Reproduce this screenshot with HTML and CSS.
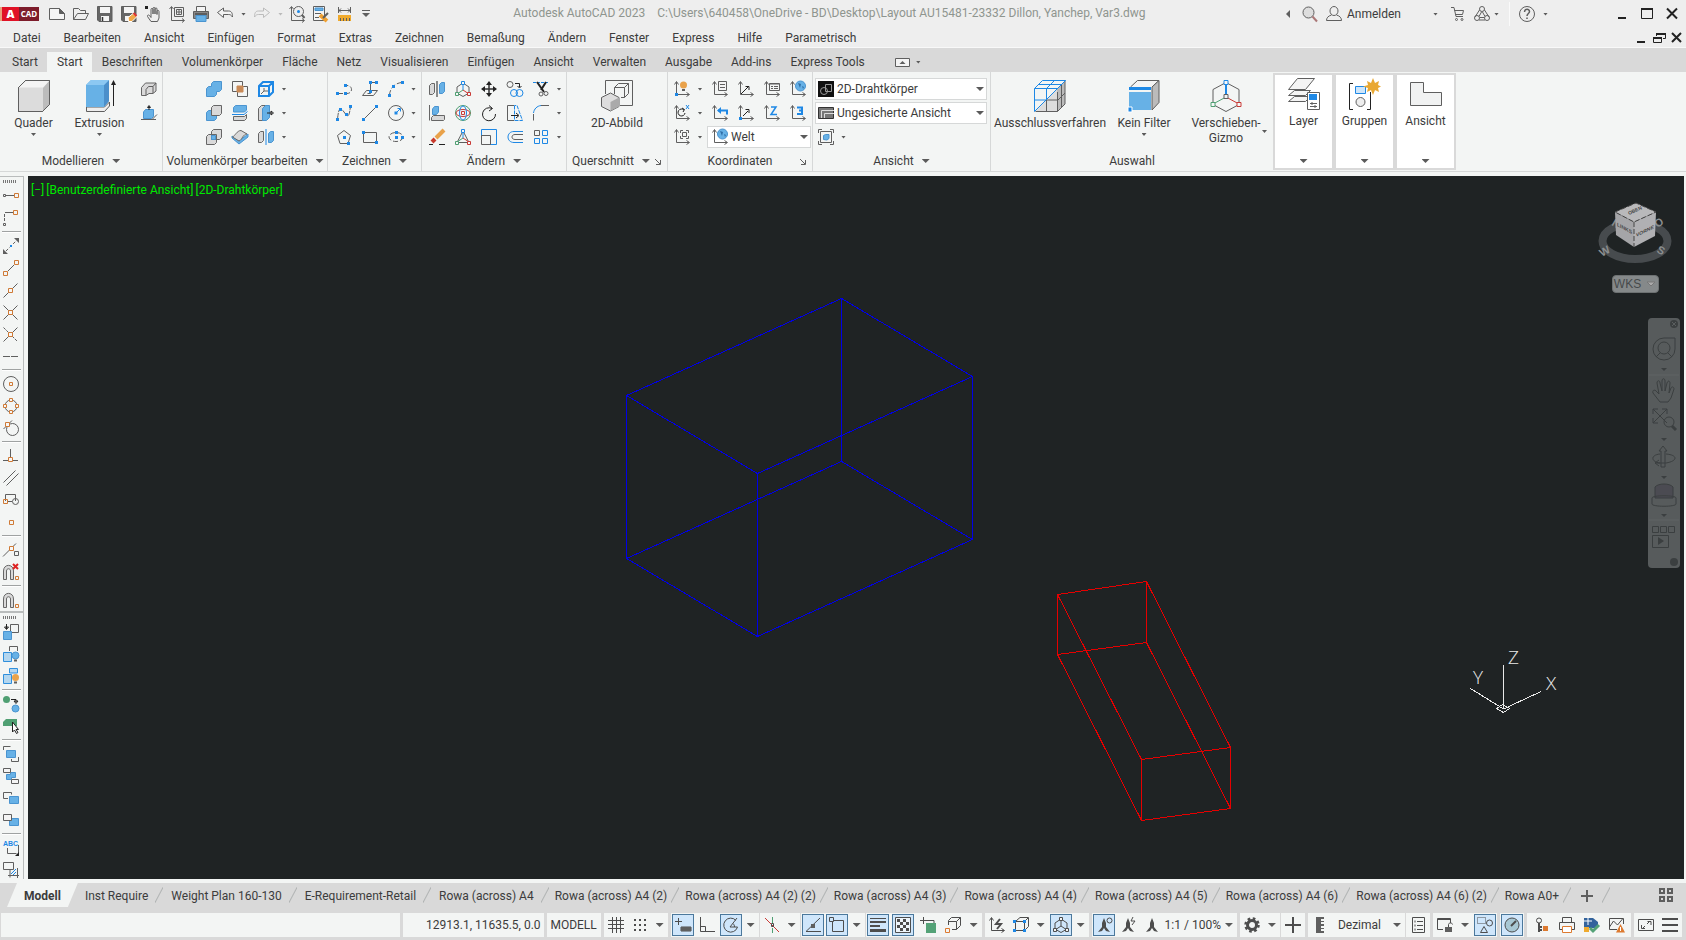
FILE: index.html
```
<!DOCTYPE html>
<html lang="de">
<head>
<meta charset="utf-8">
<title>Autodesk AutoCAD 2023</title>
<link rel="stylesheet" href="styles.css">
</head>
<body>
<header class="titlebar">
  <div class="quick">
    <span class="logo"><b>A</b><span>CAD</span></span>
    <button aria-label="Neu"><svg class="i" viewBox="0 0 16 16"><path d="M.5 2.500h10l5 5v6H.5zM10.500 2.500v5h5" class="p"/><path d="M10.500 2.500l5 5h-5z" class="d"/></svg></button>
    <button aria-label="Öffnen"><svg class="i" viewBox="0 0 16 16"><path d="M.5 13.500v-11h5l2 2h5v3M.5 13.500l4-6h11l-3 6z"/></svg></button>
    <button aria-label="Speichern"><svg class="i" viewBox="0 0 16 16"><path d="M1 .5h14v15H2L.5 14V.5z" fill="#666" /><path d="M3 1h10v6H3z" class="w"/><path d="M4 10h8v5H4z" class="w"/><path d="M5.500 11v4" class="k2"/></svg></button>
    <button aria-label="Speichern unter"><svg class="i" viewBox="0 0 16 16"><path d="M1 .5h14v15H2L.5 14V.5z" fill="#666"/><path d="M3 1h10v6H3z" class="w"/><path d="M4 10h5v5H4z" class="w"/><path d="M7.500 15.500l-.500-4 5-4 4 3-5 5z" fill="#f0a848" stroke="#fff"/><path d="M12.500 7l3 3" stroke="#d33" stroke-width="2"/></svg></button>
    <button aria-label="Pan"><svg class="i" viewBox="0 0 16 16"><path d="M0 0h3v3H0z" class="kf"/><path d="M6 15.500L2.500 10.500c-.5-1.500 1-2 2-1l1.500 2V3.500c0-1.500 2-1.500 2 0V8 2.500c0-1.500 2-1.500 2 0V8 3c0-1.500 2-1.500 2 0v5.500-3c0-1.500 2-1.500 2 0V12l-1.500 3.500z"/></svg></button>
    <button aria-label="Ansicht einpassen"><svg class="i" viewBox="0 0 16 16"><path d="M2.500 1v13.500H15M.5 3l2-2.500 2 2.500M13 12.500l2.500 2-2.500 2M5.500 1.500h9v9h-9z"/><path d="M7.500 3.500h5v5h-5zM10 3.500v5M7.500 6h5"/></svg></button>
    <button aria-label="Plotten"><svg class="i" viewBox="0 0 16 16"><path d="M3.500 5V.5h9V5" class="p"/><path d="M.5 5.500h15v7H.5z" fill="#888"/><path d="M3 9.500h10v6H3z" class="f"/><path d="M2 8h12" stroke="#333"/></svg></button>
    <button aria-label="Zurück"><svg class="i" viewBox="0 0 16 16"><path d="M.5 6.500l6-4.500v3h5c3 0 4 2 4 6-1.500-2-2-2.500-4-2.500h-5v3z" class="p"/></svg></button><i class="ar s"></i>
    <button aria-label="Wiederholen" class="dim"><svg class="i" viewBox="0 0 16 16"><path d="M15.500 6.500l-6-4.500v3h-5c-3 0-4 2-4 6 1.500-2 2-2.500 4-2.500h5v3z"/></svg></button><i class="ar s dim"></i>
    <button aria-label="Zoom"><svg class="i" viewBox="0 0 16 16"><path d="M2.500 1v13.500H15M.5 3l2-2.500 2 2.500M13 12.500l2.500 2-2.500 2"/><circle cx="9.500" cy="5.500" r="5"/><path d="M13 9l2.500 3" stroke-width="2"/><circle cx="9.500" cy="5.500" r="1.500" class="bf"/></svg></button>
    <button aria-label="Eigenschaften"><svg class="i" viewBox="0 0 16 16"><path d="M.5.5h11v14H.5z" class="p"/><path d="M2 2h8v2.500H2z" class="f"/><path d="M2 7.500h6M2 11.500h4"/><path d="M7 9l7 6" stroke="#f0a030" stroke-width="4"/><path d="M10 12l5-5" stroke-width="2"/></svg></button>
    <button aria-label="Messen"><svg class="i" viewBox="0 0 16 16"><path d="M1.500 1v6M13.500 1v6M1.500 4.500h12M4 2.500l-2 2 2 2M11 2.500l2 2-2 2"/><path d="M1 9h13v6H1z" fill="#efaa2e" stroke="none"/><path d="M3.500 12v3M6.500 12v3M9.500 12v3M12.500 12v3"/></svg></button>
    <button class="more" aria-label="Schnellzugriff anpassen"><svg class="i" viewBox="0 0 16 16"><path d="M3 4.500h8"/><path d="M3 7h8l-4 4z" class="d"/></svg></button>
  </div>
  <div class="caption"><span>Autodesk AutoCAD 2023</span><span>C:\Users\640458\OneDrive - BD\Desktop\Layout AU15481-23332 Dillon, Yanchep, Var3.dwg</span></div>
  <div class="account">
    <button aria-label="Suche einblenden"><svg class="i" viewBox="0 0 16 16"><path d="M12 4v8L8 8z" class="d"/></svg></button>
    <button aria-label="Suchen"><svg class="i" viewBox="0 0 16 16"><circle cx="6.500" cy="6.500" r="5.500" fill="#ddd"/><path d="M10.500 10.500l4.500 5" stroke="#a77" stroke-width="2"/></svg></button>
    <button class="login"><svg class="i" viewBox="0 0 16 16"><ellipse cx="8" cy="5" rx="4" ry="4.500"/><path d="M5.500 9C2 10 .5 12 .5 14.500h15C15.500 12 14 10 10.500 9"/></svg>Anmelden</button>
    <i class="ar s"></i>
    <button class="cart" aria-label="Warenkorb"><svg class="i" viewBox="0 0 16 16"><path d="M1 1.500h3l2 9h7M4.500 4.500h9l-1 4H5.500" /><circle cx="6.500" cy="13.500" r="1" /><circle cx="12" cy="13.500" r="1"/></svg></button>
    <button aria-label="Autodesk App Store"><svg class="i" viewBox="0 0 16 16"><circle cx="8" cy="3" r="2.500"/><circle cx="3" cy="12" r="2.500"/><circle cx="13" cy="12" r="2.500"/><path d="M5.500 4L1 11M10.500 4L15 11M5 14h6M7.500 6L5 10.500M8.500 6l2.500 4.500M6 11.500h4"/></svg></button><i class="ar s"></i>
    <button class="help" aria-label="Hilfe"><svg class="i" viewBox="0 0 16 16"><circle cx="8" cy="8" r="7.500"/><path d="M5.500 6c0-3.500 5-3.500 5-.5 0 2-2.500 2-2.500 4.500M8 11.500V13" stroke-width="1.500"/></svg></button><i class="ar s"></i>
  </div>
  <div class="win">
    <button aria-label="Minimieren"><svg class="i" viewBox="0 0 16 16"><path d="M4 12h8" class="kk"/></svg></button>
    <button aria-label="Maximieren"><svg class="i" viewBox="0 0 16 16"><path d="M2.500 3.500h11v9h-11z" stroke="#222"/><path d="M2 3h12" class="kk"/></svg></button>
    <button aria-label="Schließen"><svg class="i" viewBox="0 0 16 16"><path d="M3 2.500l10 10M13 2.500l-10 10" class="kk"/></svg></button>
  </div>
</header>

<nav class="menubar" aria-label="Menü">
  <button>Datei</button><button>Bearbeiten</button><button>Ansicht</button><button>Einfügen</button><button>Format</button><button>Extras</button><button>Zeichnen</button><button>Bemaßung</button><button>Ändern</button><button>Fenster</button><button>Express</button><button>Hilfe</button><button>Parametrisch</button>
  <span class="docwin">
    <button aria-label="Dokument minimieren"><svg class="i" viewBox="0 0 16 16"><path d="M4 12h8" class="kk"/></svg></button>
    <button aria-label="Dokument wiederherstellen"><svg class="i" viewBox="0 0 16 16"><path d="M5.500 6V3.500h9v5H12M2.500 7.500h8v5h-8z" stroke="#222"/><path d="M5 4h10M2 8h9" class="kk"/></svg></button>
    <button aria-label="Dokument schließen"><svg class="i" viewBox="0 0 16 16"><path d="M3 3l9 9M12 3l-9 9" class="kk"/></svg></button>
  </span>
</nav>

<nav class="tabs" aria-label="Multifunktionsleiste">
  <button>Start</button><button class="on">Start</button><button>Beschriften</button><button>Volumenkörper</button><button>Fläche</button><button>Netz</button><button>Visualisieren</button><button>Einfügen</button><button>Ansicht</button><button>Verwalten</button><button>Ausgabe</button><button>Add-ins</button><button>Express Tools</button>
  <button class="fold" aria-label="Leiste minimieren"><svg class="i" viewBox="0 0 16 16"><path d="M.5 4.500h14v8H.5z" class="p"/><path d="M4.500 10l3-3 3 3z" class="d"/></svg><i class="ar s"></i></button>
</nav>

<section class="ribbon">
  <div class="panel p1">
    <div class="body">
      <button class="big"><svg class="l" viewBox="0 0 32 32"><path d="M.5 7.500l7-7h24v24l-7 7H.5z" fill="#dcdcdc"/><path d="M25 8l6.500-7.500v24L25 31z" fill="#bcbcbc" stroke="none"/><path d="M1 7.500L8 1h23l-6 6.500z" fill="#f4f4f4" stroke="none"/><path d="M.5 7.500l7-7h24v24l-7 7H.5z"/></svg>Quader<i class="ar s"></i></button>
      <button class="big"><svg class="l" viewBox="0 0 32 32"><path d="M2.500 27h18l5-5v4l-5 5.500h-18z" fill="#eee"/><path d="M2 5l5-5h18v21l-5 6H2z" fill="#67b1e6" stroke="none"/><path d="M20 5l5-5v21l-5 6z" fill="#4b8fca" stroke="none"/><path d="M2 5l5-5h18l-5 5z" fill="#8cc8f2" stroke="none"/><path d="M29.500 26V4" class="k"/><path d="M27 5l2.500-5L32 5z" class="kf"/></svg>Extrusion<i class="ar s"></i></button>
      <div class="grid g1">
        <button aria-label="Polykörper"><svg class="i" viewBox="0 0 16 16"><path d="M.5 14.500v-8l4-4.500h10.500v8l-3 2.500H8l-3 2z" class="g"/><path d="M5 14V8.500l2.500-3H12v6.500M12 5.500L15 2" /></svg></button>
        <button aria-label="Klicken und ziehen"><svg class="i" viewBox="0 0 16 16"><path d="M0 14.500h15M11 14.500l5-5"/><path d="M2.500 13.500V7l2-2.500h8v7l-2 2z" class="f"/><path d="M8 5V1M6.500 2.500L8 .5l1.500 2z" class="k"/></svg></button>
      </div>
    </div>
    <h2>Modellieren<i class="ar"></i></h2>
  </div>
  <div class="panel p2">
    <div class="body"><div class="grid g4">
      <button aria-label="Vereinigung"><svg class="i" viewBox="0 0 16 16"><path d="M.5 15.500v-8l2-2h3v-3l2-2h8v8l-2 2h-3v3l-2 2z" class="f"/></svg></button>
      <button aria-label="Überlagerung"><svg class="i" viewBox="0 0 16 16"><path d="M.5.5h10v10H.5zM5.500 5.500h10v10h-10z"/><path d="M5 5h6v6H5z" fill="#c98a56" stroke="#c98a56"/></svg></button>
      <button aria-label="Kanten extrahieren"><svg class="i b2" viewBox="0 0 16 16"><path d="M1 5l4-4h10v10l-4 4H1zM1 5h10v10M11 5l4-4"/><path d="M3 13l3-3V7M6 10h4" stroke="#666" stroke-width="1"/></svg></button><i class="ar s"></i>
      <button aria-label="Differenz"><svg class="i" viewBox="0 0 16 16"><path d="M.5 15.500v-8l2-2h8v8l-2 2z" class="f"/><path d="M5.500 10.500v-8l2-2h8v8l-2 2z" class="g"/></svg></button>
      <button aria-label="Kappen"><svg class="i" viewBox="0 0 16 16"><path d="M1.500 7V2.500l2-2h11V5l-2 2z" class="f"/><path d="M1.500 15.500v-4h11l2-2v4l-2 2z" class="g"/><path d="M0 9.500h12l3.500-3" class="b"/></svg></button>
      <button aria-label="Flächen extrudieren"><svg class="i" viewBox="0 0 16 16"><path d="M.5 15.500v-12l3-3h4v15z" class="g"/><path d="M4.500 15.500v-12l3-3h4v12l-3 3z" class="f"/><path d="M9 8h5M13 6l2.500 2L13 10z" class="k"/></svg></button><i class="ar s"></i>
      <button aria-label="Schnittmenge"><svg class="i" viewBox="0 0 16 16"><path d="M.5 15.500v-8l2-2h8v8l-2 2zM5.500 10.500v-8l2-2h8v8l-2 2z" class="g"/><path d="M5.500 6.500h4v4h-4z" class="f"/></svg></button>
      <button aria-label="Flächenstärke"><svg class="i" viewBox="0 0 16 16"><path d="M0 9l7 6 9-7v-3l-9 7-7-5z" class="f"/><path d="M.5 8C3 7 5 1.500 9 1.500l6 3.500c-4 0-5 6-8 7z" class="g"/></svg></button>
      <button aria-label="3D-Spiegeln"><svg class="i" viewBox="0 0 16 16"><path d="M.5 13.500v-9l2-2h3v9l-2 2z" class="g"/><path d="M10.500 13.500v-9l2-2h3v9l-2 2z" class="f"/><path d="M8 0v16" class="b"/></svg></button><i class="ar s"></i>
    </div></div>
    <h2>Volumenkörper bearbeiten<i class="ar"></i></h2>
  </div>
  <div class="panel p3">
    <div class="body"><div class="grid g4">
      <button aria-label="Polylinie"><svg class="i" viewBox="0 0 16 16"><path d="M2 12.500h9c6 0 6-8 0-8" stroke-dasharray="5 2"/><path d="M0 11h3v3H0zM8 11h3v3H8zM8 3h3v3H8z" class="bf"/></svg></button>
      <button aria-label="3D-Polylinie"><svg class="i" viewBox="0 0 16 16"><path d="M.5 14.500l4-5h11l-4 5zM5.500 12.500h3v-11M8.500 1.500h6" /><path d="M7 0h3v3H7zM13 0h3v3h-3zM7 9h3v3H7z" class="bf"/></svg></button>
      <button aria-label="Bogen"><svg class="i" viewBox="0 0 16 16"><path d="M1.500 14C2 7 7 2 14 1.500" stroke-dasharray="5 2"/><path d="M0 13h3v3H0zM4 4h3v3H4zM13 0h3v3h-3z" class="bf"/></svg></button><i class="ar s"></i>
      <button aria-label="Spline"><svg class="i" viewBox="0 0 16 16"><path d="M1.500 14C3 0 5 3 8 7s5 8 6.500-6" stroke-dasharray="6 1"/><path d="M0 13h3v3H0zM3 3h3v3H3zM9 8h3v3H9zM13 0h3v3h-3z" class="bf"/></svg></button>
      <button aria-label="Linie"><svg class="i" viewBox="0 0 16 16"><path d="M1.500 14.500l13-13"/><path d="M0 13h3v3H0zM13 0h3v3h-3z" class="bf"/></svg></button>
      <button aria-label="Kreis"><svg class="i" viewBox="0 0 16 16"><circle cx="8" cy="8" r="7.500"/><path d="M8 8l4-4M9.500 3.500h3v3" class="b"/><path d="M6.500 6.500h3v3h-3z" class="bf"/></svg></button><i class="ar s"></i>
      <button aria-label="Polygon"><svg class="i" viewBox="0 0 16 16"><path d="M8 1.500l6.500 5-2.500 8H4l-2.500-8z"/><path d="M7 7h3v3H7zM11 13h3v3h-3z" class="bf"/></svg></button>
      <button aria-label="Rechteck"><svg class="i" viewBox="0 0 16 16"><path d="M1.500 3.500h13v10h-13z"/><path d="M0 2h3v3H0zM13 12h3v3h-3z" class="bf"/></svg></button>
      <button aria-label="Ellipse"><svg class="i" viewBox="0 0 16 16"><ellipse cx="8" cy="8" rx="7" ry="4.500" stroke-dasharray="5 2"/><path d="M7 2h3v3H7zM7 7h3v3H7zM13 7h3v3h-3z" class="bf"/></svg></button><i class="ar s"></i>
    </div></div>
    <h2>Zeichnen<i class="ar"></i></h2>
  </div>
  <div class="panel p4">
    <div class="body"><div class="grid g6">
      <button aria-label="Spiegeln"><svg class="i" viewBox="0 0 16 16"><path d="M.5 13.500v-9l2-2h3v9l-2 2z" class="g"/><path d="M10.500 12.500v-9l2-2h3v9l-2 2z" class="f"/><path d="M8 0v16" class="k"/></svg></button>
      <button aria-label="3D-Schieben"><svg class="i" viewBox="0 0 16 16"><path d="M8 2l6 4v6l-6 3.500L2 12V6z"/><path d="M8 9V2" class="b"/><path d="M8 9l6 4" class="r"/><path d="M8 9l-6 4" class="n"/><path d="M6.500.5h3v3h-3z" class="b w1"/><path d="M12.500 11.500h3v3h-3z" class="r w1"/><path d="M.5 11.500h3v3h-3z" class="n w1"/></svg></button>
      <button aria-label="Schieben"><svg class="i" viewBox="0 0 16 16"><path d="M8 2v12M2 8h12" class="k2"/><path d="M5 4l3-4 3 4zM5 12l3 4 3-4zM4 5L0 8l4 3zM12 5l4 3-4 3z" class="kf"/></svg></button>
      <button aria-label="Kopieren"><svg class="i" viewBox="0 0 16 16"><circle cx="3" cy="3.500" r="3"/><path d="M8 2.500h4.500V6M10.500 5l2 2 2-2" class="k"/><circle cx="7" cy="12" r="3.500" class="b"/><circle cx="12.500" cy="12" r="3.500" class="b"/></svg></button>
      <button aria-label="Stutzen"><svg class="i" viewBox="0 0 16 16"><path d="M0 1.500h16" class="b" stroke-dasharray="3 1"/><path d="M4 1l7 10M13 1L8 9" class="kk"/><circle cx="8" cy="13" r="2"/><circle cx="13" cy="12.500" r="2"/></svg></button><i class="ar s"></i>
      <button aria-label="Ausrichten"><svg class="i" viewBox="0 0 16 16"><path d="M.5 0v15.500M4.500 10.500h11v4l-1 1h-12v-3z" class="g"/><path d="M3.500 9.500V4l2-2.500h4V7l-2 2.500z" class="f"/></svg></button>
      <button aria-label="3D-Drehen"><svg class="i" viewBox="0 0 16 16"><circle cx="8" cy="8" r="7.500" class="n"/><ellipse cx="8" cy="8" rx="7" ry="3.500" class="r"/><ellipse cx="8" cy="8" rx="3.500" ry="7" class="b"/><path d="M6.500 6.500h3v3h-3z" class="r"/></svg></button>
      <button aria-label="Drehen"><svg class="i" viewBox="0 0 16 16"><path d="M11 3.500A6.500 6.500 0 1 0 14.500 9M8 .5l3.500 3L8 6" class="k"/></svg></button>
      <button aria-label="Strecken"><svg class="i" viewBox="0 0 16 16"><path d="M7 15.500H.5v-15H7"/><path d="M7.500.5v15h8L10 .5z" class="b" stroke-dasharray="4 1"/><path d="M4 10.500h7M9 8l3 2.500L9 13" class="k"/></svg></button>
      <button aria-label="Abrunden"><svg class="i" viewBox="0 0 16 16"><path d="M.5 15.500V9M8 .5h8"/><path d="M.5 8C1 4 4 1 8 .5" class="b"/></svg></button><i class="ar s"></i>
      <button aria-label="Löschen"><svg class="i" viewBox="0 0 16 16"><path d="M0 15.500h4M10 15.500h6" class="k"/><path d="M7 9l8-8" stroke="#e9a24a" stroke-width="4"/><path d="M3 13l3-3" stroke="#c8392b" stroke-width="4"/></svg></button>
      <button aria-label="3D-Skalieren"><svg class="i" viewBox="0 0 16 16"><path d="M8 2l6 11.500H2z"/><path d="M8 9V2" class="b"/><path d="M8 9l6 4" class="r"/><path d="M8 9l-6 4" class="n"/><path d="M6.500.5h3v3h-3z" class="b w1"/><path d="M12.500 12.500h3v3h-3z" class="r w1"/><path d="M.5 12.500h3v3h-3z" class="n w1"/></svg></button>
      <button aria-label="Skalieren"><svg class="i" viewBox="0 0 16 16"><path d="M.5 7V.5h15v15H9" class="b"/><path d="M.5 6.500h9v9h-9z"/></svg></button>
      <button aria-label="Versetzen"><svg class="i" viewBox="0 0 16 16"><path d="M16 2.500H7c-8 0-8 11 0 11h9" class="b"/><path d="M16 5.500H8c-4 0-4 5 0 5h8"/></svg></button>
      <button aria-label="Anordnung"><svg class="i" viewBox="0 0 16 16"><path d="M1.500 1.500h5v5h-5z"/><path d="M9.500 1.500h5v5h-5zM1.500 9.500h5v5h-5zM9.500 9.500h5v5h-5z" class="b"/></svg></button><i class="ar s"></i>
    </div></div>
    <h2>Ändern<i class="ar"></i></h2>
  </div>
  <div class="panel p5">
    <div class="body"><button class="big"><svg class="l" viewBox="0 0 32 32"><path d="M4.500 14V.5h27v25H19"/><path d="M13.500 14V7.500l4-4h10v10l-4 4H20M13.500 7.500h10v10M23.500 7.500l4-4"/><path d="M.5 17.500l9-4.500 8.500 4.500v9L9.500 31l-9-4.500z" fill="#ddd"/><path d="M9.500 22L18 17.500v9L9.500 31z" fill="#aaa" stroke="none"/></svg>2D-Abbild</button></div>
    <h2>Querschnitt<i class="ar"></i><svg class="launch" viewBox="0 0 6 6"><path d="M0 0l5 5M5.500 1v4.500H1"/></svg></h2>
  </div>
  <div class="panel p6">
    <div class="body ucs">
      <div class="grid g2">
        <button aria-label="BKS"><svg class="i" viewBox="0 0 16 16"><use href="#ax"/><circle cx="9.500" cy="4" r="3.500" fill="#e9a24a" stroke="none"/><path d="M8 9h3" stroke-width="2"/><path d="M1 12h3v3H1z" class="bf"/></svg></button><i class="ar s"></i>
        <button aria-label="BKS drehen"><svg class="i" viewBox="0 0 16 16"><use href="#ax"/><path d="M10 5a3.500 3.500 0 1 0 1 3M8 3l2.500 1.500L9 7" class="k"/><path d="M12 0l3 4M15 0l-3 4" class="b"/></svg></button><i class="ar s"></i>
        <button aria-label="BKS Objekt"><svg class="i" viewBox="0 0 16 16"><use href="#ax"/><path d="M6.500 4V1.500H9M12 1.500h2.500V4M14.500 7v2.500H12M6.500 7v2.500H9M8.500 3.500h4v4h-4z"/></svg></button><i class="ar s"></i>
      </div>
      <div class="ucs-r">
        <div class="grid g4n">
          <button aria-label="BKS-Manager"><svg class="i" viewBox="0 0 16 16"><use href="#ax"/><path d="M6.500.5h8v9h-8z" class="p"/><path d="M8 3.500h5M8 6.500h5"/></svg></button>
          <button aria-label="Ursprung"><svg class="i" viewBox="0 0 16 16"><use href="#ax"/><path d="M3 13l7-7M7.500 5.500H11V9" class="k"/></svg></button>
          <button aria-label="Benannte BKS"><svg class="i" viewBox="0 0 16 16"><use href="#ax"/><path d="M5.500 2.500h10v7h-10zM5.500 3h10M7 5.500h2M10 5.500h4M7 7.500h2M10 7.500h4"/></svg></button>
          <button aria-label="Welt-BKS"><svg class="i" viewBox="0 0 16 16"><use href="#ax"/><circle cx="10.500" cy="5" r="5" class="f"/><path d="M8 2l3 1-1 4zM12 5l2 1-1 2z" fill="#2f6fa8" stroke="none"/></svg></button>
          <button aria-label="BKS zurück"><svg class="i" viewBox="0 0 16 16"><use href="#ax"/><path d="M6 5.500h9v4" class="b" stroke-width="2"/><path d="M9 2v7L5 5.500z" class="bf"/></svg></button>
          <button aria-label="BKS Vektor"><svg class="i" viewBox="0 0 16 16"><use href="#ax"/><path d="M5 11l5-5M7.500 4.500H11V8" class="k"/><path d="M1 12h3v3H1z" class="bf"/></svg></button>
          <button aria-label="Z-Achse"><svg class="i" viewBox="0 0 16 16"><use href="#ax"/><path d="M7 2h5l-5 7.500h6" class="b" stroke-width="1.500"/></svg></button>
          <button aria-label="3 Punkte"><svg class="i" viewBox="0 0 16 16"><use href="#ax"/><path d="M7 2.500h5v3H9h3v3.500H7" class="b" stroke-width="2"/></svg></button>
        </div>
        <label class="combo"><svg class="i" viewBox="0 0 16 16"><use href="#ax"/><circle cx="10.500" cy="5" r="5" class="f"/><path d="M8 2l3 1-1 4zM12 5l2 1-1 2z" fill="#2f6fa8" stroke="none"/></svg><select aria-label="BKS"><option>Welt</option></select><i class="ar"></i></label>
      </div>
    </div>
    <h2>Koordinaten<svg class="launch" viewBox="0 0 6 6"><path d="M0 0l5 5M5.500 1v4.500H1"/></svg></h2>
  </div>
  <div class="panel p7">
    <div class="body views">
      <label class="combo"><svg class="i" viewBox="0 0 16 16"><path d="M0 0h16v16H0z" fill="#111" stroke="none"/><circle cx="6" cy="10" r="3.500" stroke="#999"/><path d="M7.500 3.500h6v7h-6z" stroke="#999"/></svg><select aria-label="Visueller Stil"><option>2D-Drahtkörper</option></select><i class="ar"></i></label>
      <label class="combo"><svg class="i" viewBox="0 0 16 16"><path d="M.5 2.500h15v11H.5z" fill="#777" stroke="#333"/><path d="M3.500 13V5.500H16M6.500 13V8.500H16" stroke="#ddd"/></svg><select aria-label="Ansicht wählen"><option>Ungesicherte Ansicht</option></select><i class="ar"></i></label>
      <div class="row"><button aria-label="Ansichtsfenster"><svg class="i" viewBox="0 0 16 16"><path d="M.5 4V.5H4M12 .5h3.500V4M15.500 12v3.500H12M4 15.500H.5V12M2.500 2.500h11v11h-11z"/><path d="M5.500 10.500v-4l2-1h3.500v4l-2 1.500z" class="f"/></svg></button><i class="ar s"></i></div>
    </div>
    <h2>Ansicht<i class="ar"></i></h2>
  </div>
  <div class="panel p8">
    <div class="body">
      <button class="big w3"><svg class="l" viewBox="0 0 32 32"><path d="M1.500 31.500L23 9l0 22.500z" fill="#ddd" stroke="none"/><path d="M23 9l8-8v23l-8 7.500z" fill="#bbb" stroke="none"/><path d="M1.500 31.500h22V12M12.500 20v11M12 20h12l7-7M23.500 31.500l7.500-7.500V1M27.500 5v22"/><path d="M.5 31.500v-23l8-8h23L.5 31.500M.5 8.500h22.500M4.500 4.500h23M12.500 19V8.500l8-8M.5 20h11.500M23.500 8.500l8-8" class="b"/></svg>Ausschlussverfahren</button>
      <button class="big w2"><svg class="l" viewBox="0 0 32 32"><path d="M2.500 7l7-6.500h21.500l-7 6.500" class="p"/><path d="M24 7l7-6.500v22L24 30z" fill="#bbb"/><path d="M1 7h22v3H1z" class="bf"/><path d="M1 12h22v18H1z" fill="#67b1e6" stroke="none"/><path d="M0 27h4v5H0z" fill="#1e88e5" stroke="#fff"/></svg>Kein Filter<i class="ar s"></i></button>
      <button class="big w4"><svg class="l" viewBox="0 0 32 32"><path d="M16 2.500l13 7v15l-13 7-13-7v-15z"/><path d="M16 16V3" class="b2"/><path d="M16 17l13 7" class="r"/><path d="M16 17L3 24" class="n"/><path d="M14 .5h4v4h-4z" class="b w1"/><path d="M14 14.500h4v4h-4z" class="p"/><path d="M27 22.500h4v4h-4z" class="r w1"/><path d="M1 22.500h4v4H1z" class="n w1"/></svg>Verschieben-<br>Gizmo<i class="ar s side"></i></button>
    </div>
    <h2>Auswahl</h2>
  </div>
  <button class="slide"><svg class="l" viewBox="0 0 32 32"><path d="M.5 23.500l6-5h16l-5 5zM.5 17.500l6-5h16l-5 5z" class="p"/><path d="M.5 11.500l9-11h17l-9 11z" class="p"/><path d="M19.500 14.500h12v17h-12z" fill="#fff"/><path d="M21 16h8v6h-8z" class="bf"/><path d="M22 25.500h7M22 28.500h7M24 24v3M27 27v3"/></svg>Layer<i class="ar"></i></button>
  <button class="slide"><svg class="l" viewBox="0 0 32 32"><path d="M4 5.500H.5v26H4M18 31.500h3.500V14" class="k"/><path d="M6.500 8.500h10v7h-10z" fill="#cfe6fa" stroke="#1e88e5"/><circle cx="11.500" cy="24" r="4.500" fill="#eee"/><path d="M24 0l2 5 4-2-1 4 3 1.500-3 1.500 1 4-4-2-2 5-2-5-4 2 1-4-5-1.500 5-1.500-1-4 4 2z" fill="#e9a832" stroke="none"/></svg>Gruppen<i class="ar"></i></button>
  <button class="slide"><svg class="l" viewBox="0 0 32 32"><path d="M.5 4.500h13v10h18v13H.5z" fill="#f1f2f2"/></svg>Ansicht<i class="ar"></i></button>
</section>

<svg width="0" height="0" class="defs"><symbol id="ax" viewBox="0 0 16 16" overflow="visible"><path d="M2.500 1v12.500H15M.5 3.500l2-3 2 3M12.500 11.500l3 2-3 2"/></symbol></svg>

<main class="work">
  <aside class="tools">
    <div class="bar">
      <i class="grip"></i>
      <button aria-label="Temporärer Spurpunkt"><svg class="i" viewBox="0 0 16 16"><path d="M.5 6.500h2v2h-2zM3 7.500h8"/><path d="M11.500 5.500h4v4h-4z" class="o"/></svg></button>
      <button aria-label="Fang Von"><svg class="i" viewBox="0 0 16 16"><path d="M2 2.500h8"/><path d="M1.500 4v8" stroke-dasharray="3 1"/><path d="M.5 13.500h2v2h-2z"/><path d="M10.500.5h4v4h-4z" class="o"/></svg></button>
      <hr>
      <button aria-label="Mitte zwischen"><svg class="i" viewBox="0 0 16 16"><path d="M3 13L13 3" stroke-dasharray="3 2"/><path d="M0 11v5h5zM11 0h5v5z" class="d"/><path d="M7 7h2v2H7z" class="bf"/></svg></button>
      <button aria-label="Endpunkt"><svg class="i" viewBox="0 0 16 16"><path d="M5 11l6-6"/><path d="M.5 11.500h4v4h-4zM11.500.5h4v4h-4z" class="o"/></svg></button>
      <button aria-label="Mittelpunkt"><svg class="i" viewBox="0 0 16 16"><path d="M.5 15.500l14-14"/><path d="M5.500 6.500h4v4h-4z" class="o w0"/></svg></button>
      <button aria-label="Schnittpunkt"><svg class="i" viewBox="0 0 16 16"><path d="M.5 15.500l14-14M.5 1.500l14 14"/><path d="M5.500 6.500h4v4h-4z" class="o w0"/></svg></button>
      <button aria-label="Angenommener Schnittpunkt"><svg class="i" viewBox="0 0 16 16"><path d="M.5 15.500l14-14"/><path d="M.5 1.500l14 14" stroke-dasharray="3 1"/><path d="M5.500 6.500h4v4h-4z" class="o w0"/></svg></button>
      <button aria-label="Hilfslinie"><svg class="i" viewBox="0 0 16 16"><path d="M0 8.500h7M8 8.500h8" stroke-dasharray="7 1 2 1"/></svg></button>
      <hr>
      <button aria-label="Zentrum"><svg class="i" viewBox="0 0 16 16"><circle cx="8" cy="8" r="7.500"/><path d="M6.500 6.500h3v3h-3z" class="o"/></svg></button>
      <button aria-label="Quadrant"><svg class="i" viewBox="0 0 16 16"><circle cx="8" cy="8" r="6"/><path d="M6.500.5h3v3h-3zM6.500 12.500h3v3h-3zM.5 6.500h3v3h-3zM12.500 6.500h3v3h-3z" class="o w0"/></svg></button>
      <button aria-label="Tangente"><svg class="i" viewBox="0 0 16 16"><circle cx="9.500" cy="9.500" r="6"/><path d="M.5 9L9 .5"/><path d="M2.500 2.500h4v4h-4z" class="o w0"/></svg></button>
      <hr>
      <button aria-label="Lot"><svg class="i" viewBox="0 0 16 16"><path d="M7.500 1v8M0 12.500h15"/><path d="M5.500 9.500h4v4h-4z" class="o w0"/></svg></button>
      <button aria-label="Parallel"><svg class="i" viewBox="0 0 16 16"><path d="M.5 12.500l12-12M3.500 15.500l12-12"/></svg></button>
      <button aria-label="Basispunkt"><svg class="i" viewBox="0 0 16 16"><path d="M2.500 9V2.500h10V9M5 9.500h4"/><circle cx="12.500" cy="9.500" r="3"/><path d="M.5 7.500h4v4h-4z" class="o"/></svg></button>
      <button aria-label="Punkt"><svg class="i" viewBox="0 0 16 16"><path d="M6.500 6.500h4v4h-4z" class="o"/></svg></button>
      <hr>
      <button aria-label="Nächster"><svg class="i" viewBox="0 0 16 16"><path d="M0 14.500l13-13M11.500 9.500h4v4h-4z"/><path d="M6.500 4.500h4v4h-4z" class="o w0"/></svg></button>
      <button aria-label="Kein Fang"><svg class="i" viewBox="0 0 16 16"><path d="M.5 15.500V7C.5-.5 10.500-.5 10.500 7v8.500h-3V7c0-3-4-3-4 0v8.500z" class="g"/><path d="M12.500 12.500h3v3h-3z" class="o"/><path d="M10 0l5 5M15 0l-5 5" stroke="#d22" stroke-width="2"/></svg></button>
      <hr>
      <button aria-label="Objektfang-Einstellungen"><svg class="i" viewBox="0 0 16 16"><path d="M.5 15.500V7C.5-.5 10.500-.5 10.500 7v8.500h-3V7c0-3-4-3-4 0v8.500z" class="g"/><path d="M12.500 12.500h3v3h-3z" class="o"/></svg></button>
    </div>
    <div class="bar">
      <i class="grip"></i>
      <button aria-label="Ablegen"><svg class="i" viewBox="0 0 16 16"><path d="M7.500.5h8v8h-8z"/><path d="M3.500 0v5M1.500 3l2 2.500 2-2.500z" class="k"/><path d="M.5 7.500h8v8h-8z" class="f"/></svg></button>
      <button aria-label="Ausblenden"><svg class="i" viewBox="0 0 16 16"><path d="M6.500 5V.5h8V5"/><path d="M.5 6.500h8v9h-8z" class="lf"/><circle cx="12.500" cy="9.500" r="3.500" class="f"/><path d="M11 14.500h3" stroke-width="2"/></svg></button>
      <button aria-label="Isolieren"><svg class="i" viewBox="0 0 16 16"><path d="M6.500 5V.5h8V5zM.5 6.500h8v9h-8z" class="lf"/><circle cx="12.500" cy="9.500" r="3.500" fill="#e9a24a" stroke="none"/><path d="M11 14.500h3" stroke-width="2"/></svg></button>
      <hr>
      <button aria-label="Ersetzen"><svg class="i" viewBox="0 0 16 16"><circle cx="3.500" cy="3.500" r="3.500" fill="#4f9f72" stroke="none"/><path d="M8 3.500h5V6M11 5h4l-2 2.500z" class="k"/><circle cx="12.500" cy="12.500" r="3.500" class="f"/></svg></button>
      <button aria-label="Auswählen"><svg class="i" viewBox="0 0 16 16"><path d="M0 4l3-3h11v7H0z" fill="#4f9f72" stroke="none"/><path d="M9.500 4v10l2-2 2 3.500 1.500-1-2-3h2.500z" fill="#fff" stroke="#222"/></svg></button>
      <hr>
      <button aria-label="Ganz oben"><svg class="i" viewBox="0 0 16 16"><path d="M.5 4V.5h7M15.500 11v4.500h-7V13"/><path d="M3.500 4.500h9v7h-9z" class="f"/></svg></button>
      <button aria-label="Ganz unten"><svg class="i" viewBox="0 0 16 16"><path d="M3.500 11.500v-5h4v-2h5v5h-4v2z" class="f"/><path d="M.5.5h7v4h-7zM8.500 11.500h7v4h-7z" class="p"/></svg></button>
      <button aria-label="Vor Objekt"><svg class="i" viewBox="0 0 16 16"><path d="M5 8.500H.5v-6h8v2"/><path d="M6.500 6.500h9v7h-9z" class="f"/></svg></button>
      <button aria-label="Hinter Objekt"><svg class="i" viewBox="0 0 16 16"><path d="M6.500 6.500h9v7h-9z" class="f"/><path d="M.5 2.500h8v6h-8z" class="p"/></svg></button>
      <hr>
      <button aria-label="Text nach vorn"><svg class="i" viewBox="0 0 16 16"><text x="0" y="6" class="abc">ABC</text><path d="M4.500 8v5.500h9M15.500 5v8"/><path d="M16 12v4h-4z" class="kf"/></svg></button>
      <button aria-label="Schraffur nach hinten"><svg class="i" viewBox="0 0 16 16"><path d="M.5.5h10v7H.5zM7 8v7.500M5 13.500h11M14.500 6v10"/><path d="M8 12l5-5M10 13l3-3" class="b"/></svg></button>
    </div>
  </aside>

  <div class="canvas">
    <svg class="drawing" viewBox="28 176 1656 703">
      <g stroke="#0000e6"><path d="M841.500 298.500L626.500 395.500 757.500 473.500 972.500 376.500zM841.500 461.500L626.500 558.500 757.500 636.500 972.500 539.500zM841.500 298.500v163M626.500 395.500v163M757.500 473.500v163M972.500 376.500v163"/></g>
      <g stroke="#e60000"><path d="M1057.500 594.500L1146.500 581.500 1230.500 747.500 1141.500 759.500zM1057.500 654.500L1146.500 642.500 1230.500 808.500 1141.500 820.500zM1057.500 594.500v60M1146.500 581.500v61M1230.500 747.500v61M1141.500 759.500v61"/></g>
      <g stroke="#e8e8e8"><path d="M1503.500 709V665M1503.500 709L1541 691.500M1503.500 709L1470.500 688.500M1496.500 708.500l6-4 7 4-6 4z"/></g>
      <g class="axis"><text x="1508" y="664">Z</text><text x="1546" y="690">X</text><text x="1473" y="684">Y</text></g>
    </svg>
    <div class="viewlabel"><button>[−]</button><button>[Benutzerdefinierte Ansicht]</button><button>[2D-Drahtkörper]</button></div>
    <div class="cube">
      <svg viewBox="0 0 76 64" aria-label="ViewCube">
        <ellipse cx="38" cy="40" rx="32.500" ry="18" fill="none" stroke="#474b4e" stroke-width="8"/>
        <g class="compass"><text transform="translate(5 56) rotate(-30)">W</text><text transform="translate(59 51) rotate(28)">S</text><text transform="translate(14 24) rotate(30)">N</text><text transform="translate(60 27) rotate(-30)">O</text></g>
        <path d="M18 11l21-9 20 9-22 10z" fill="#b9b9bb"/><path d="M18 11l19 10v25L19 34z" fill="#a5a5a8"/><path d="M37 21l22-10-1 24-21 11z" fill="#b0b0b3"/>
        <path d="M18 11l21-9 20 9-22 10zM37 21v25" fill="none" stroke="#444" stroke-dasharray="5 2"/>
        <g class="faces"><text transform="translate(32 14) rotate(-24)">OBEN</text><text transform="translate(20 25) skewY(28)">LINKS</text><text transform="translate(39 36) skewY(-26)">VORNE</text></g>
      </svg>
      <button class="wks">WKS<svg viewBox="0 0 10 6"><path d="M1 1h8L5 5z"/></svg></button>
    </div>
    <div class="navbar">
      <svg viewBox="0 0 32 250" aria-label="Navigationsleiste">
        <circle cx="26" cy="6" r="4" class="nf"/><path d="M24 4l4 4M28 4l-4 4" stroke="#5a5e5f"/>
        <path d="M27 31V20H16a11 11 0 1 0 11 11z"/><circle cx="16" cy="30" r="6"/><path d="M8 39l4-4M24 39l-4-4"/>
        <path d="M13 50h6l-3 3z" class="nf"/><path d="M1 57h30" stroke="#606465"/>
        <path d="M12 84L5 75c-1-3 2-4 4-1l2 2-2-11c0-3 3-3 3 0l2 8V63c0-3 3-3 3 0v10l2-8c1-3 3-2 3 0l-1 10 2-5c1-2 3-1 3 1l-3 9-3 4z"/>
        <path d="M5 91l14 14M5 105l14-14M5 96v-5h5M14 91h5v5M5 100v5h5"/><circle cx="21" cy="104" r="5"/><path d="M24 108l4 4" stroke-width="3"/>
        <path d="M13 120h6l-3 3z" class="nf"/><path d="M13 149v-16h-2l4-5 4 5h-2v16z"/><path d="M12 145c-9-1-10-8 0-9M18 136c12 1 12 7 0 9H8M11 142l-4 3 4 3"/>
        <path d="M13 158h6l-3 3z" class="nf"/><path d="M7 169v11h18v-11c-3-4-15-4-18 0z" fill="#4b4b52"/><path d="M4 180c0-3 24-3 24 0v6c0 3-24 3-24 0z"/>
        <path d="M13 196h6l-3 3z" class="nf"/><path d="M1 202h30" stroke="#606465"/>
        <path d="M4.500 208.500h6v6h-6zM12.500 208.500h6v6h-6zM20.500 208.500h6v6h-6zM4.500 217.500h16v12h-16z"/><path d="M10 219l6 4-6 4z" class="nf"/>
        <circle cx="26" cy="244" r="4" class="nf"/>
      </svg>
    </div>
  </div>
</main>

<nav class="layouts" aria-label="Layouts">
  <button class="on"><b>Modell</b></button><button>Inst Require</button><button>Weight Plan 160-130</button><button>E-Requirement-Retail</button><button>Rowa (across) A4</button><button class="tight">Rowa (across) A4 (2)</button><button class="tight">Rowa (across) A4 (2) (2)</button><button class="tight">Rowa (across) A4 (3)</button><button class="tight">Rowa (across) A4 (4)</button><button class="tight">Rowa (across) A4 (5)</button><button class="tight">Rowa (across) A4 (6)</button><button class="tight">Rowa (across) A4 (6) (2)</button><button class="tight">Rowa A0+</button><button class="add" aria-label="Neues Layout"><svg class="i" viewBox="0 0 16 16"><path d="M8 2v12M2 8h12" stroke-width="2"/></svg></button>
  <button class="all" aria-label="Alle Layouts"><svg class="i" viewBox="0 0 16 16"><path d="M2 2h4v4H2zM10 2h4v4h-4zM2 10h4v4H2zM10 10h4v4h-4z" stroke-width="2"/></svg></button>
</nav>

<footer class="status">
  <div class="seg fill"></div>
  <div class="seg coords">12913.1, 11635.5, 0.0</div>
  <div class="seg model"><button>MODELL</button></div>
  <div class="seg"><button aria-label="Raster"><svg class="i" viewBox="0 0 16 16"><path d="M4.500 0v16M8.500 0v16M12.500 0v16M0 3.500h16M0 7.500h16M0 11.500h16"/></svg></button><button aria-label="Fangmodus"><svg class="i" viewBox="0 0 16 16"><path d="M2 3h2M7 3h2M12 3h2M2 8h2M7 8h2M12 8h2M2 13h2M7 13h2M12 13h2" stroke-width="2"/></svg></button><i class="ar"></i></div>
  <div class="seg"><button class="t" aria-label="Dynamische Eingabe"><svg class="i" viewBox="0 0 16 16"><path d="M3.500 1v7M0 4.500h7M6 10h10v4H6z" /><path d="M6 10h10v4H6z" class="d"/></svg></button><button aria-label="Ortho"><svg class="i" viewBox="0 0 16 16"><path d="M1.500 0v14.500H16M1.500 9.500h5v5"/></svg></button><button class="t" aria-label="Polare Spur"><svg class="i" viewBox="0 0 16 16"><path d="M13 3.500A7 7 0 1 0 14.500 10H7l7-9"/><path d="M10 6.500c1 1 1.500 2 1.500 3.500"/></svg></button><i class="ar"></i></div>
  <div class="seg j"><button aria-label="Isometrischer Entwurf"><svg class="i" viewBox="0 0 16 16"><path d="M1 1l14 14" class="r"/><path d="M8.500 0v6M8.500 11v5" class="n"/><path d="M7.500 6.500h2v3h-2z"/></svg></button><i class="ar"></i></div>
  <div class="seg j"><button class="t" aria-label="Objektfangspur"><svg class="i" viewBox="0 0 16 16"><path d="M15 1L1 14.500h15M6 7l3 3" stroke-width="1"/><path d="M6 7h4v4H6z" class="d"/></svg></button><button class="t" aria-label="Objektfang"><svg class="i" viewBox="0 0 16 16"><path d="M5 3.500h9.500v11h-11V5M.5.5h4v4h-4z"/></svg></button><i class="ar"></i></div>
  <div class="seg j loose"><button class="t" aria-label="Linienstärke"><svg class="i" viewBox="0 0 16 16"><path d="M0 1.500h16" stroke-width="1"/><path d="M0 5h16M0 9h10" stroke-width="2"/><path d="M0 13.500h16" stroke-width="3"/></svg></button><button class="t" aria-label="Transparenz"><svg class="i" viewBox="0 0 16 16"><path d="M.5.5h15v15H.5z" fill="#eef5fb"/><path d="M2 3.500h12M2 9.500h12" stroke-width="3" stroke-dasharray="3 3"/><path d="M5 6.500h9M5 12.500h9" stroke-width="3" stroke-dasharray="3 3"/></svg></button><button aria-label="Auswahlwechsel"><svg class="i" viewBox="0 0 16 16"><path d="M3.500 0v7M0 3.500h14v3"/><path d="M6 6h10v10H6z" fill="#54a277" stroke="none"/></svg></button><button aria-label="3D-Objektfang"><svg class="i" viewBox="0 0 16 16"><path d="M3.500 8V3.500l3-3h9v8l-4 4H7M3.500 4.500h8v8M11.500 4.500l4-4"/><path d="M.5 11.500h4v4h-4z" class="o"/></svg></button><i class="ar"></i></div>
  <div class="seg"><button aria-label="Dynamisches BKS"><svg class="i" viewBox="0 0 16 16"><use href="#ax"/><path d="M11 2L7 7h5l-4 5" stroke-width="2"/></svg></button><button aria-label="Auswahlfilter"><svg class="i" viewBox="0 0 16 16"><path d="M2.500 4.500h9v9h-9zM3 4l4-3.500h8.500v9l-4 4M12 4l3-3"/><path d="M0 3h3v3H0zM10 3h3v3h-3zM0 12h3v3H0zM10 12h3v3h-3z" class="bf"/></svg></button><i class="ar"></i><button class="t" aria-label="Gizmo"><svg class="i" viewBox="0 0 16 16"><path d="M8 2l6 4v6l-6 3.500L2 12V6zM8 9V2M8 9l6 4M8 9l-6 4"/><path d="M6.500.5h3v3h-3zM12.500 11.500h3v3h-3zM.5 11.500h3v3h-3z" class="p"/></svg></button><i class="ar"></i></div>
  <div class="seg"><button class="t" aria-label="Beschriftungssichtbarkeit"><svg class="i" viewBox="0 0 16 16"><use href="#scale"/><circle cx="13.500" cy="3.500" r="2.500"/></svg></button><button aria-label="Automatischer Maßstab"><svg class="i" viewBox="0 0 16 16"><use href="#scale"/><path d="M13 0l-2 4h4l-3 4"/></svg></button><button aria-label="Beschriftungsmaßstab"><svg class="i" viewBox="0 0 16 16"><use href="#scale"/></svg></button><button class="txt">1:1 / 100%</button><i class="ar"></i></div>
  <div class="seg"><button aria-label="Arbeitsbereich"><svg class="i" viewBox="0 0 16 16"><circle cx="8" cy="8" r="4.500" stroke-width="3"/><circle cx="8" cy="8" r="6.500" stroke-width="2.500" stroke-dasharray="2.600 2.500"/></svg></button><i class="ar"></i></div>
  <div class="seg j"><button aria-label="Beschriftungsüberwachung"><svg class="i" viewBox="0 0 16 16"><path d="M8 0v16M0 8h16" stroke-width="2"/></svg></button></div>
  <div class="seg"><button aria-label="Einheiten"><svg class="i" viewBox="0 0 16 16"><path d="M4 0h8v2H9v2h3v1H9v2h3v2H9v2h3v1H9v2h3v2H4z" class="d"/></svg></button><button class="txt dez">Dezimal</button><i class="ar"></i></div>
  <div class="seg j"><button aria-label="Schnelleigenschaften"><svg class="i" viewBox="0 0 16 16"><path d="M2.500.5h12v15h-12zM7 4.500h6M7 8.500h6M7 12.500h6"/><path d="M4.500 4.500h1M4.500 8.500h1M4.500 12.500h1" stroke-width="2"/></svg></button></div>
  <div class="seg"><button aria-label="Oberfläche sperren"><svg class="i" viewBox="0 0 16 16"><path d="M6 12.500H.5v-11h13V6M.5 2.500h13"/><path d="M8 10h7v5H8z" class="d"/><path d="M11.500 10V7.500c0-2 4-2 4 0"/></svg></button><i class="ar"></i><button class="t" aria-label="Objekte isolieren"><svg class="i" viewBox="0 0 16 16"><path d="M.5.5h8v6h-8z" stroke-dasharray="1 1"/><circle cx="12.500" cy="6" r="3"/><path d="M7 9.500l3.500 6h-7z"/></svg></button></div>
  <div class="seg"><button class="t" aria-label="Hardwarebeschleunigung"><svg class="i" viewBox="0 0 16 16"><circle cx="8" cy="8" r="7" fill="#a8c8d4"/><path d="M7 9l5-5" stroke-width="2"/></svg></button></div>
  <div class="seg tray"><button aria-label="Lizenz"><svg class="i" viewBox="0 0 16 16"><circle cx="5" cy="3.500" r="2.500"/><path d="M5 6v9M5 10h3M5 13h3" stroke-width="2"/><path d="M9 9h5v5H9z" fill="#dd7a30" stroke="none"/></svg></button><button aria-label="Plotstatus"><svg class="i" viewBox="0 0 16 16"><path d="M3.500 5V.5h9V5M.5 5.500h15v7H.5z"/><path d="M3.500 9.500h9v6h-9z" fill="#fff" stroke="#dd7a30"/></svg></button><button aria-label="Standards"><svg class="i" viewBox="0 0 16 16"><path d="M0 1h9l5 4v6H0z" fill="#33639c" stroke="none"/><path d="M0 4h8M4 0v8" stroke="#fff"/><path d="M0 10h5v5H0z" fill="#efaa2e" stroke="none"/><path d="M6 11l3 3 6-6" stroke="#54a277" stroke-width="3"/></svg></button><button aria-label="Grafikstatus"><svg class="i" viewBox="0 0 16 16"><path d="M8 12.500H.5v-11h14V7M.5 10l4-6 4 4 5-6"/><path d="M11.500 7l4.500 8.500H7z" fill="#dd7a30" stroke="none"/><path d="M11.500 10v4" stroke="#fff"/></svg></button></div>
  <div class="seg"><button aria-label="Vollbild"><svg class="i" viewBox="0 0 16 16"><path d="M.5 2.500h15v11H.5z"/><path d="M9 7l3-3M9.500 4.500H13V8M7 9l-3 3M3.500 8v3.500H7"/></svg></button><button aria-label="Anpassung"><svg class="i" viewBox="0 0 16 16"><path d="M0 2h16M0 8h16M0 14h16" stroke-width="2"/></svg></button></div>
</footer>
<svg width="0" height="0" class="defs"><symbol id="scale" viewBox="0 0 16 16" overflow="visible"><path d="M8 1l2 5v4l4 5-4-1-2-3-2 3-4 1 4-5V6z" fill="#4d4d4d" stroke="none"/></symbol></svg>
</body>
</html>
```
FILE: styles.css
```
*{box-sizing:border-box}
body{margin:0;height:100vh;display:flex;flex-direction:column;background:#f3f5f4;color:#3c3c3c;font:12px/16px Roboto,"Open Sans",sans-serif;overflow:hidden}
button{font:inherit;color:inherit;background:none;border:0;padding:0;margin:0;display:flex;align-items:center;justify-content:center;white-space:nowrap}
svg{display:block;flex:none;fill:none;stroke:#5f5f5f;overflow:visible}
.defs{position:absolute}
.i{width:16px;height:16px}
.l{width:32px;height:32px}
/* icon paints */
.p{fill:#f4f4f4}
.d{fill:#5f5f5f;stroke:none}
.w{fill:#f4f4f4;stroke:none}
.k{stroke:#222}
.kf{fill:#222;stroke:none}
.k2{stroke:#333;stroke-width:1.5}
.kk{stroke:#222;stroke-width:2}
.g{fill:#d9d9d9;stroke:#666}
.f{fill:#67b1e6;stroke:#4a94d0}
.lf{fill:#b3d6ef;stroke:#2f8fdc}
.b{stroke:#1e88e5}
.b2{stroke:#1e88e5;stroke-width:2}
.bf{fill:#1e88e5;stroke:none}
.o{stroke:#cf7a36}
.r{stroke:#c93a36}
.n{stroke:#4f9f72}
.w0,.w1{fill:#f6f7f7}
.abc{fill:#1e88e5;stroke:none;font:bold 7px "Liberation Sans",sans-serif}
/* drop-down marks */
.ar{flex:none;width:8px;height:4px;background:#5a5a5a;clip-path:polygon(0 0,100% 0,50% 100%)}
.ar.s{width:5px;height:3px}
.dim{opacity:.35}

.titlebar{height:28px;flex:none;background:#eee;display:flex;align-items:center}
.quick{display:flex;align-items:center;flex:none}
.quick button{width:24px;height:24px}
.quick .more{width:20px}
.quick .ar{margin:0 4px}
.quick .ar.dim{margin-right:2px}
.logo{display:flex;width:39px;height:14px;margin-right:6px;color:#fff;font:bold 8px/14px "Open Sans",sans-serif;background:#7d1c2b;border-left:2px solid #e8a37c}
.logo b{width:17px;background:#e01226;text-align:center;font-size:11px;line-height:14px}
.logo span{flex:1;text-align:center}
.caption{flex:1;display:flex;justify-content:center;gap:12px;color:#8f958f;white-space:nowrap;line-height:26px;height:28px;padding-left:8px}
.account,.win,.docwin{display:flex;align-items:center;flex:none}
.account button{width:24px;height:24px}
.account .login{width:auto;gap:5px;margin:0 32px 0 4px}
.account .cart{margin-left:8px}
.account .help{margin-left:10px;border-left:1px solid #fafafa;width:34px}
.win{margin-left:61px;padding-right:2px}
.win button{width:25px;height:24px}
.menubar{height:20px;flex:none;background:#eee;border-bottom:1px solid #f8f8f8;display:flex;align-items:center;padding-left:2px}
.menubar>button{padding:0 12px 0 11px}
.docwin{margin-left:auto}
.docwin button{width:18px}
.tabs{height:24px;flex:none;background:#d9d9d9;display:flex;align-items:flex-end;padding-left:2px}
.tabs button{height:20px;padding:0 9px 0 10px}
.tabs .on{background:#f3f5f4}
.tabs .fold{gap:5px;margin-left:11px}

.ribbon{height:100px;flex:none;display:flex;align-items:stretch;border-bottom:1px solid #d6d8d8}
.panel{display:flex;flex-direction:column;border-right:1px solid #d6d8d8;padding-top:5px;flex:none}
.p1{width:163px}.p2{width:165px}.p3{width:94px}.p4,.p6{width:145px}.p5{width:101px}.p7{width:178px}.p8{width:282px;border-right:0}
.body{height:72px;display:flex;justify-content:center}
.panel h2{margin:0;height:22px;padding-top:2px;font-size:12px;font-weight:400;display:flex;align-items:center;justify-content:center;gap:8px;position:relative;white-space:nowrap}
.launch{width:6px;height:6px;position:absolute;right:6px;top:10px}
.p5 h2{padding-right:12px}
.big{flex-direction:column;justify-content:flex-start;width:66px;padding-top:3px;line-height:15px;position:relative}
.big .l{margin-bottom:4px}
.big .ar{margin-top:2px}
.big .side{position:absolute;right:6px;top:53px;margin:0}
.w3{width:118px}.w2{width:70px}.w4{width:94px}
.grid{display:grid;grid-auto-rows:24px;align-items:center;justify-items:center}
.g1{grid-template-columns:26px;margin-left:3px}
.g2{grid-template-columns:26px 10px}
.g4{grid-template-columns:26px 26px 26px 10px}
.g6{grid-template-columns:repeat(5,26px) 10px}
.g4n{grid-template-columns:repeat(4,26px)}
.ucs{gap:2px}
.combo{display:flex;align-items:center;background:#fff;border:1px solid #d6d8d8;height:22px;margin:1px 0;padding:0 2px}
.combo select{flex:1;min-width:0;appearance:none;border:0;background:none;font:inherit;color:inherit;padding:0 0 0 3px}
.ucs .combo .i{margin-left:2px}
.ucs-r{width:104px}
.views{flex-direction:column;justify-content:flex-start;padding:0 3px 0 2px}
.views .row{display:flex;align-items:center;height:24px;padding-left:3px;gap:7px}
.slide{flex-direction:column;justify-content:flex-start;width:61px;margin-top:1px;margin-bottom:1px;background:#fff;border:2px solid #d9d9d9;padding:3px 0 5px}
.slide .l{margin-bottom:3px}
.slide .ar{margin-top:auto}

.work{flex:1;display:flex;min-height:0;padding:4px 2px 4px 0}
.tools{width:24px;margin-right:4px;flex:none;overflow:hidden}
.bar{border:solid #b9bcbc;border-width:1px 1px 1px 0}
.bar+.bar{border-bottom:0}
.bar button{width:22px;height:22px}
.bar hr{height:1px;margin:2px 2px 3px;border:0;background:#9fa2a2;box-shadow:0 1px #fff}
.grip{display:block;width:13px;height:3px;margin:3px 0 2px 3px;background:repeating-linear-gradient(90deg,#777 0 1px,#0000 1px 2px)}
.canvas{flex:1;position:relative;background:#1f2324;overflow:hidden}
.drawing{width:100%;height:100%;shape-rendering:crispEdges}
.axis{fill:#e8e8e8;stroke:none;font:300 19px "Open Sans",sans-serif}
.viewlabel{position:absolute;left:3px;top:6px;display:flex;gap:2px;color:#00e800}
.cube{position:absolute;right:11px;top:25px;width:76px;display:flex;flex-direction:column;align-items:center}
.cube>svg{width:76px;height:64px;stroke:none}
.compass{fill:#8b8e8f;font:bold 11px "Liberation Sans",sans-serif}
.faces{fill:#444;font:bold 5px "Liberation Sans",sans-serif}
.wks{width:47px;height:18px;margin-top:10px;background:#85898a;border:1px solid #6d7172;border-radius:4px;color:#45494a;font:12px/14px "Liberation Sans",sans-serif;gap:5px}
.wks svg{width:10px;height:6px;stroke:#777;fill:#aaa}
.navbar{position:absolute;right:4px;top:142px;width:32px;background:#575b5c;border-radius:4px}
.navbar svg{width:32px;height:250px;stroke:#3b3f40}
.nf{fill:#3b3f40;stroke:none}

.layouts{height:30px;background:#d9d9d9;display:flex;align-items:flex-start;padding-left:7px;flex:none}
.layouts button{height:24px;line-height:18px;padding:1px 16px 0 7px;background:linear-gradient(118deg,#0000 calc(50% - 1px),#b0b3b3 50%,#0000 calc(50% + 1px)) right 1px top 4px/8px 16px no-repeat}
.layouts .on{background:#f3f5f4;clip-path:polygon(10px 0,100% 0,calc(100% - 10px) 100%,0 100%);padding:1px 17px 0}
.layouts .tight{padding:1px 13px 0 5px}
.layouts .all{margin-left:auto;padding:0;width:40px;background:none}

.status{height:27px;background:#d9d9d9;display:flex;gap:3px;padding:0 4px 3px 1px;flex:none}
.seg{background:#f3f5f4;display:flex;align-items:center;flex:none}
.j{margin-left:-2px}
.loose{gap:1px}
.seg svg{stroke:#4d4d4d}
.seg button{width:24px;height:22px}
.seg .ar{margin:0 4px}
.seg .t{width:22px;margin:0 1px;background:#cfe6fb;border:1px solid #4b789c}
.seg .o{stroke:#dd7a30}.seg .r{stroke:#c93a36}.seg .n{stroke:#4f9f72}
.seg .txt{width:auto;padding:0 0 0 1px}
.seg .dez{padding:0 8px 0 6px}
.seg.fill{flex:1}
.coords{width:141px;justify-content:flex-end;padding-right:3px}
.seg.model button{width:54px}
.tray{padding:0 2px}
.seg.tray button{width:25px}
```
